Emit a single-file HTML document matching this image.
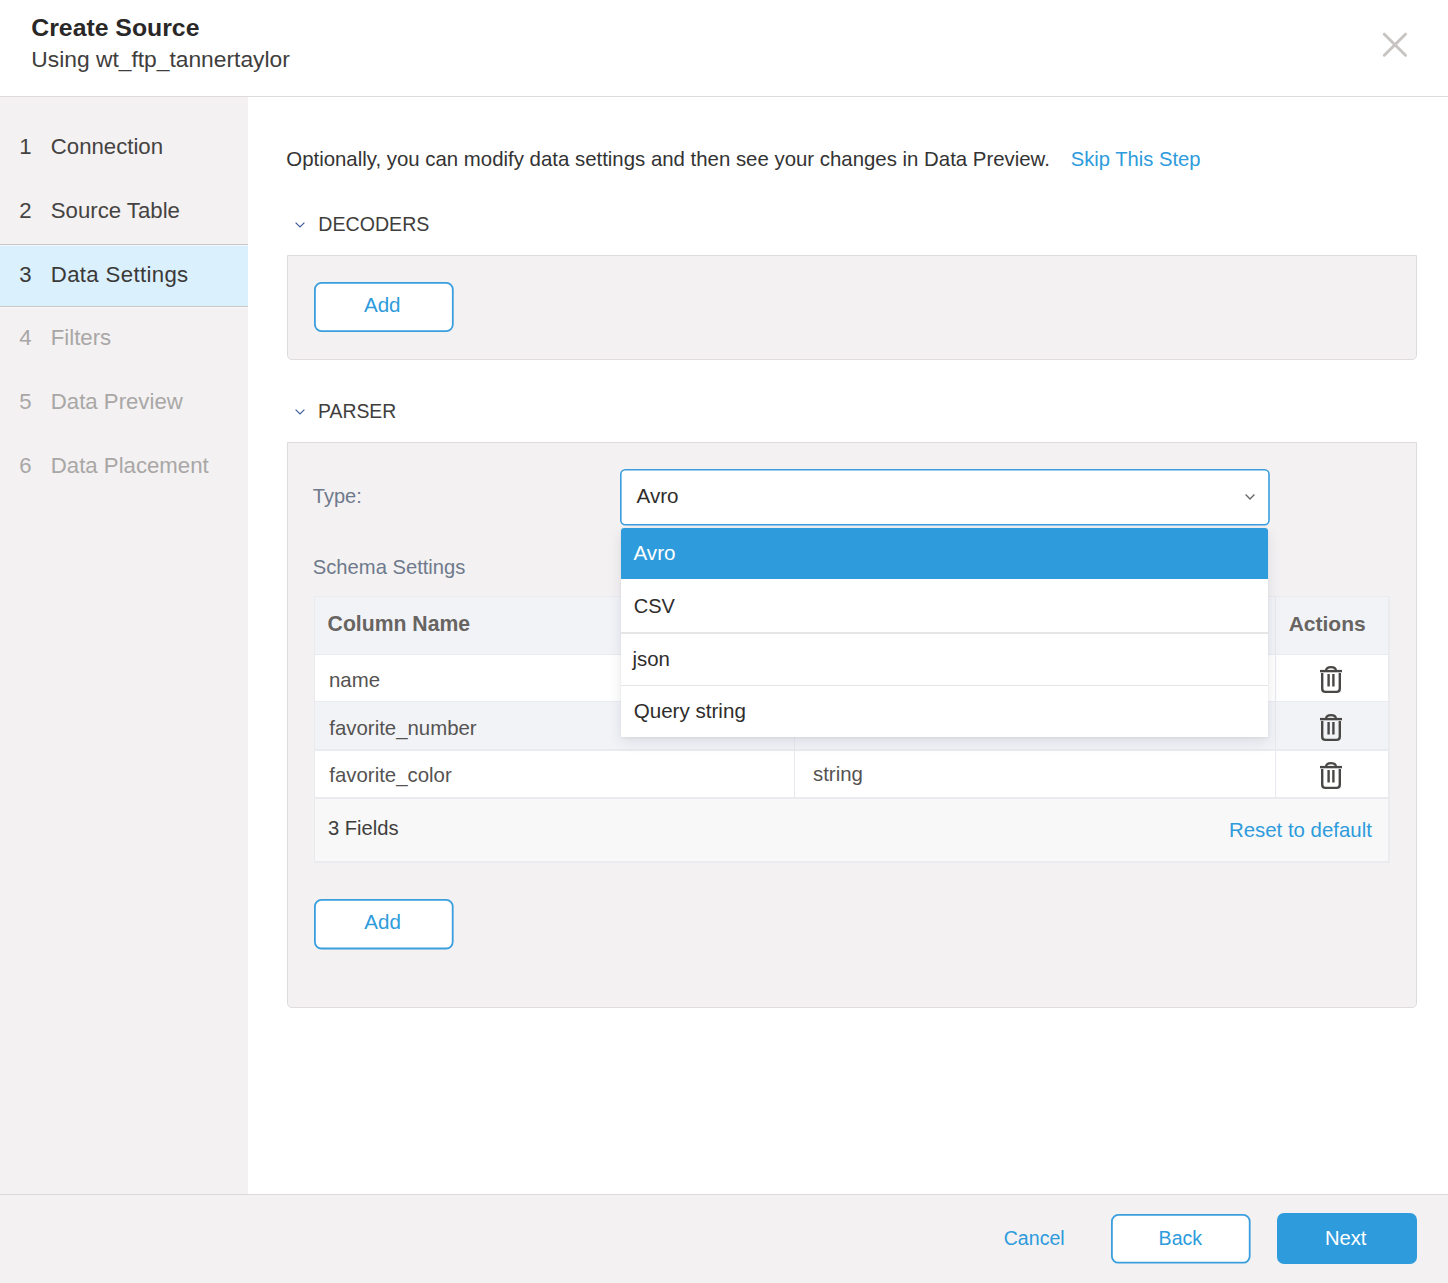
<!DOCTYPE html>
<html><head><meta charset="utf-8"><title>Create Source</title>
<style>
html,body{margin:0;padding:0;}
body{width:1448px;height:1283px;position:relative;overflow:hidden;background:#fff;font-family:"Liberation Sans",sans-serif;}
.t{position:absolute;line-height:0;white-space:nowrap;}
.panel{position:absolute;box-sizing:border-box;background:#f3f1f2;border:1.5px solid #dfdcdb;border-radius:0 0 5px 5px;}
.btn{position:absolute;box-sizing:border-box;background:#fff;border:2px solid #3ea0de;border-radius:7px;}
</style></head><body>
<div style="position:absolute;left:0;top:96px;width:1448px;height:1px;background:#dedada"></div>
<div style="position:absolute;left:0;top:97px;width:248px;height:1097px;background:#f3f1f2"></div>
<div style="position:absolute;left:0;top:244px;width:248px;height:1px;background:#c9c6c6"></div>
<div style="position:absolute;left:0;top:245px;width:248px;height:1px;background:#eef8fe"></div>
<div style="position:absolute;left:0;top:246px;width:248px;height:60px;background:#daf0fc"></div>
<div style="position:absolute;left:0;top:306px;width:248px;height:1px;background:#c9c6c6"></div>
<div style="position:absolute;left:0;top:307px;width:248px;height:1px;background:#faf9f9"></div>
<div style="position:absolute;left:0;top:1194px;width:1448px;height:89px;background:#f3f1f2;border-top:1px solid #dcd9d9;box-sizing:border-box"></div>
<svg style="position:absolute;left:1378px;top:28px" width="34" height="34" viewBox="0 0 34 34"><path d="M6.3 6.2 L27.5 27.2 M27.5 6.2 L6.3 27.2" stroke="#c8c4c2" stroke-width="3" stroke-linecap="round" fill="none"/></svg>
<div class="t" style="left:31.30px;top:28.31px;font-size:24.8px;color:#2a2827;font-weight:700;">Create Source</div>
<div class="t" style="left:31.30px;top:59.10px;font-size:22.8px;color:#403e3d;">Using wt_ftp_tannertaylor</div>
<div class="t" style="left:19.30px;top:147.31px;font-size:22.2px;color:#454341;">1</div>
<div class="t" style="left:50.80px;top:147.31px;font-size:22.2px;color:#454341;">Connection</div>
<div class="t" style="left:19.30px;top:210.71px;font-size:22.2px;color:#454341;">2</div>
<div class="t" style="left:50.80px;top:210.71px;font-size:22.2px;color:#454341;">Source Table</div>
<div class="t" style="left:19.30px;top:274.61px;font-size:22.2px;color:#3b3938;">3</div>
<div class="t" style="left:50.80px;top:274.61px;font-size:22.2px;color:#3b3938;letter-spacing:0.35px;">Data Settings</div>
<div class="t" style="left:19.30px;top:338.21px;font-size:22.2px;color:#a9a7a6;">4</div>
<div class="t" style="left:50.80px;top:338.21px;font-size:22.2px;color:#a9a7a6;">Filters</div>
<div class="t" style="left:19.30px;top:401.91px;font-size:22.2px;color:#a9a7a6;">5</div>
<div class="t" style="left:50.80px;top:401.91px;font-size:22.2px;color:#a9a7a6;">Data Preview</div>
<div class="t" style="left:19.30px;top:465.51px;font-size:22.2px;color:#a9a7a6;">6</div>
<div class="t" style="left:50.80px;top:465.51px;font-size:22.2px;color:#a9a7a6;">Data Placement</div>
<div class="t" style="left:286.30px;top:158.93px;font-size:20.4px;color:#333333;">Optionally, you can modify data settings and then see your changes in Data Preview.</div>
<div class="t" style="left:1070.70px;top:158.50px;font-size:20.2px;color:#2e9bdc;">Skip This Step</div>
<svg style="position:absolute;left:293px;top:220px" width="14" height="9.5" viewBox="0 0 14 9.5"><path d="M2.6 2.6 L7.0 6.9 L11.4 2.6" stroke="#42609a" stroke-width="1.3" fill="none"/></svg>
<div class="t" style="left:318.30px;top:224.21px;font-size:19.6px;color:#403e3d;">DECODERS</div>
<div class="panel" style="left:287px;top:255px;width:1130px;height:105px"></div>
<svg style="position:absolute;left:312px;top:280.3px" width="143.7" height="54"><rect x="2.9" y="2.9" width="137.89999999999998" height="48.2" rx="6.5" fill="#fff" stroke="#3a9ede" stroke-width="1.8"/></svg>
<div class="t" style="left:363.90px;top:305.46px;font-size:20.6px;color:#2e9bdc;">Add</div>
<svg style="position:absolute;left:293px;top:406.5px" width="14" height="9.5" viewBox="0 0 14 9.5"><path d="M2.6 2.6 L7.0 6.9 L11.4 2.6" stroke="#42609a" stroke-width="1.3" fill="none"/></svg>
<div class="t" style="left:318.00px;top:411.28px;font-size:19.4px;color:#403e3d;">PARSER</div>
<div class="panel" style="left:287px;top:442px;width:1130px;height:566px"></div>
<div class="t" style="left:312.80px;top:496.37px;font-size:20.0px;color:#6e7a8c;">Type:</div>
<div class="t" style="left:312.80px;top:566.60px;font-size:20.2px;color:#6e7a8c;">Schema Settings</div>
<div style="position:absolute;left:314px;top:596px;width:1076px;height:266.5px;background:#eaebef"></div>
<div style="position:absolute;left:315px;top:597px;width:1073px;height:57px;background:#f2f3f7"></div>
<div style="position:absolute;left:315px;top:655px;width:1073px;height:46px;background:#ffffff"></div>
<div style="position:absolute;left:315px;top:702px;width:1073px;height:47px;background:#f2f3f7"></div>
<div style="position:absolute;left:315px;top:751px;width:1073px;height:46px;background:#ffffff"></div>
<div style="position:absolute;left:315px;top:799px;width:1073px;height:62px;background:#f8f8f8"></div>
<div style="position:absolute;left:794px;top:597px;width:1px;height:200px;background:#e8e9ee"></div>
<div style="position:absolute;left:1275px;top:597px;width:1px;height:200px;background:#e8e9ee"></div>
<div class="t" style="left:327.60px;top:623.65px;font-size:21.2px;color:#676461;font-weight:700;">Column Name</div>
<div class="t" style="left:1288.70px;top:623.72px;font-size:21.0px;color:#676461;font-weight:700;">Actions</div>
<div class="t" style="left:329.00px;top:680.13px;font-size:20.4px;color:#555352;">name</div>
<div class="t" style="left:329.30px;top:727.73px;font-size:20.4px;color:#555352;">favorite_number</div>
<div class="t" style="left:329.30px;top:775.33px;font-size:20.4px;color:#555352;">favorite_color</div>
<div class="t" style="left:813.00px;top:773.73px;font-size:20.4px;color:#555352;">string</div>
<div class="t" style="left:327.90px;top:828.10px;font-size:20.2px;color:#403e3d;">3 Fields</div>
<div class="t" style="left:1229.00px;top:829.93px;font-size:20.4px;color:#2e9bdc;">Reset to default</div>
<svg style="position:absolute;left:1319px;top:666px" width="24" height="28" viewBox="0 0 24 28"><path d="M7 5 C7 2.5 8.5 1.2 12 1.2 C15.5 1.2 17 2.5 17 5" stroke="#4a4846" stroke-width="2.2" fill="none"/><path d="M1 5.1 H23" stroke="#4a4846" stroke-width="2.4" fill="none"/><path d="M3.2 7 V22.5 C3.2 24.8 4.5 25.9 6.5 25.9 H17.5 C19.5 25.9 20.8 24.8 20.8 22.5 V7" stroke="#4a4846" stroke-width="2.4" fill="none"/><path d="M9.6 8 V20.5 M14.4 8 V20.5" stroke="#4a4846" stroke-width="2.4" fill="none"/></svg>
<svg style="position:absolute;left:1319px;top:714px" width="24" height="28" viewBox="0 0 24 28"><path d="M7 5 C7 2.5 8.5 1.2 12 1.2 C15.5 1.2 17 2.5 17 5" stroke="#4a4846" stroke-width="2.2" fill="none"/><path d="M1 5.1 H23" stroke="#4a4846" stroke-width="2.4" fill="none"/><path d="M3.2 7 V22.5 C3.2 24.8 4.5 25.9 6.5 25.9 H17.5 C19.5 25.9 20.8 24.8 20.8 22.5 V7" stroke="#4a4846" stroke-width="2.4" fill="none"/><path d="M9.6 8 V20.5 M14.4 8 V20.5" stroke="#4a4846" stroke-width="2.4" fill="none"/></svg>
<svg style="position:absolute;left:1319px;top:762px" width="24" height="28" viewBox="0 0 24 28"><path d="M7 5 C7 2.5 8.5 1.2 12 1.2 C15.5 1.2 17 2.5 17 5" stroke="#4a4846" stroke-width="2.2" fill="none"/><path d="M1 5.1 H23" stroke="#4a4846" stroke-width="2.4" fill="none"/><path d="M3.2 7 V22.5 C3.2 24.8 4.5 25.9 6.5 25.9 H17.5 C19.5 25.9 20.8 24.8 20.8 22.5 V7" stroke="#4a4846" stroke-width="2.4" fill="none"/><path d="M9.6 8 V20.5 M14.4 8 V20.5" stroke="#4a4846" stroke-width="2.4" fill="none"/></svg>
<svg style="position:absolute;left:312px;top:897.2px" width="143.6" height="54.4"><rect x="2.9" y="2.9" width="137.79999999999998" height="48.6" rx="6.5" fill="#fff" stroke="#3a9ede" stroke-width="1.8"/></svg>
<div class="t" style="left:364.30px;top:921.86px;font-size:20.6px;color:#2e9bdc;">Add</div>
<svg style="position:absolute;left:618.2px;top:466.8px" width="653.8" height="60.6"><rect x="2.8" y="2.8" width="648.1999999999999" height="55.0" rx="4.5" fill="#fff" stroke="#3a9ede" stroke-width="1.6"/></svg>
<div class="t" style="left:636.60px;top:496.46px;font-size:20.6px;color:#2f2d2c;">Avro</div>
<svg style="position:absolute;left:1243px;top:492px" width="14" height="9.5" viewBox="0 0 14 9.5"><path d="M2.6 2.6 L7.0 6.9 L11.4 2.6" stroke="#6a6866" stroke-width="1.4" fill="none"/></svg>
<div style="position:absolute;left:621px;top:528px;width:647px;height:209px;background:#fff;border-radius:3px 3px 0 0;box-shadow:0 5px 14px rgba(40,50,80,0.10), 0 1px 3px rgba(0,0,0,0.06)"></div>
<div style="position:absolute;left:621px;top:528px;width:647px;height:51px;background:#2e9bdc;border-radius:3px 3px 0 0"></div>
<div style="position:absolute;left:621px;top:632px;width:647px;height:1.5px;background:#e6e6e6"></div>
<div style="position:absolute;left:621px;top:684.5px;width:647px;height:1.5px;background:#e6e6e6"></div>
<div class="t" style="left:633.50px;top:552.66px;font-size:20.6px;color:#ffffff;">Avro</div>
<div class="t" style="left:633.70px;top:606.07px;font-size:20.0px;color:#2f2d2c;">CSV</div>
<div class="t" style="left:632.41px;top:658.93px;font-size:20.4px;color:#2f2d2c;">json</div>
<div class="t" style="left:633.70px;top:710.76px;font-size:20.6px;color:#2f2d2c;">Query string</div>
<div class="t" style="left:1003.70px;top:1238.11px;font-size:19.6px;color:#2e9bdc;">Cancel</div>
<svg style="position:absolute;left:1109px;top:1211.5px" width="143.6" height="53.6"><rect x="2.9" y="2.9" width="137.79999999999998" height="47.800000000000004" rx="6.5" fill="#fff" stroke="#3a9ede" stroke-width="1.8"/></svg>
<div class="t" style="left:1158.60px;top:1238.11px;font-size:19.6px;color:#2e9bdc;">Back</div>
<div style="position:absolute;left:1277px;top:1213px;width:140px;height:51px;background:#2e9bdc;border-radius:7px"></div>
<div class="t" style="left:1324.90px;top:1237.90px;font-size:20.2px;color:#ffffff;">Next</div>
</body></html>
